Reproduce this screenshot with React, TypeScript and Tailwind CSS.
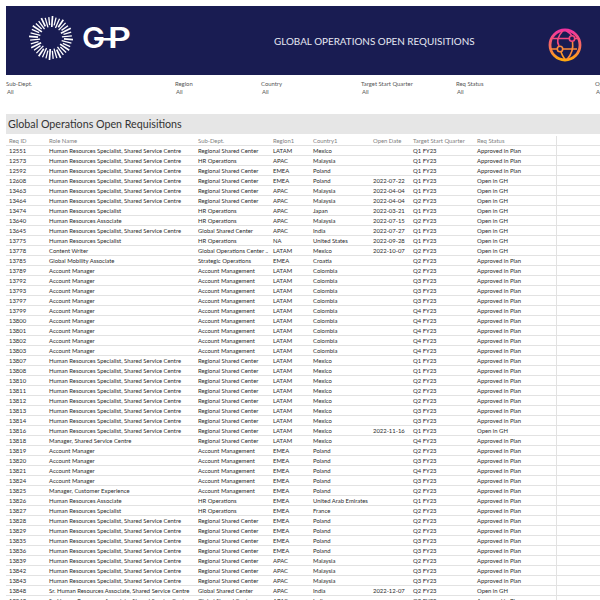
// Global Operations Open Requisitions dashboard
const HRSS = 'Human Resources Specialist, Shared Service Centre';
const HRS = 'Human Resources Specialist';
const HRA = 'Human Resources Associate';
const SRA = 'Sr. Human Resources Associate, Shared Service Centre';
const AM = 'Account Manager';
const RSC = 'Regional Shared Center';
const HRO = 'HR Operations';
const GSC = 'Global Shared Center';
const ACM = 'Account Management';
const PLAN = 'Approved in Plan';
const GH = 'Open in GH';

type Row = [string, string, string, string, string, string, string, string];

const rows: Row[] = [
  ['12551', HRSS, RSC, 'LATAM', 'Mexico', '', 'Q1 FY23', PLAN],
  ['12573', HRSS, HRO, 'APAC', 'Malaysia', '', 'Q1 FY23', PLAN],
  ['12592', HRSS, RSC, 'EMEA', 'Poland', '', 'Q1 FY23', PLAN],
  ['12608', HRSS, RSC, 'EMEA', 'Poland', '2022-07-22', 'Q1 FY23', GH],
  ['13463', HRSS, RSC, 'APAC', 'Malaysia', '2022-04-04', 'Q1 FY23', GH],
  ['13464', HRSS, RSC, 'APAC', 'Malaysia', '2022-04-04', 'Q2 FY23', GH],
  ['13474', HRS, HRO, 'APAC', 'Japan', '2022-03-21', 'Q1 FY23', GH],
  ['13640', HRA, HRO, 'APAC', 'Malaysia', '2022-07-15', 'Q2 FY23', GH],
  ['13645', HRSS, GSC, 'APAC', 'India', '2022-07-27', 'Q1 FY23', GH],
  ['13775', HRS, HRO, 'NA', 'United States', '2022-09-28', 'Q1 FY23', GH],
  ['13778', 'Content Writer', 'Global Operations Center ..', 'LATAM', 'Mexico', '2022-10-07', 'Q2 FY23', GH],
  ['13785', 'Global Mobility Associate', 'Strategic Operations', 'EMEA', 'Croatia', '', 'Q2 FY23', PLAN],
  ['13789', AM, ACM, 'LATAM', 'Colombia', '', 'Q2 FY23', PLAN],
  ['13792', AM, ACM, 'LATAM', 'Colombia', '', 'Q3 FY23', PLAN],
  ['13793', AM, ACM, 'LATAM', 'Colombia', '', 'Q3 FY23', PLAN],
  ['13797', AM, ACM, 'LATAM', 'Colombia', '', 'Q3 FY23', PLAN],
  ['13799', AM, ACM, 'LATAM', 'Colombia', '', 'Q4 FY23', PLAN],
  ['13800', AM, ACM, 'LATAM', 'Colombia', '', 'Q4 FY23', PLAN],
  ['13801', AM, ACM, 'LATAM', 'Colombia', '', 'Q4 FY23', PLAN],
  ['13802', AM, ACM, 'LATAM', 'Colombia', '', 'Q4 FY23', PLAN],
  ['13803', AM, ACM, 'LATAM', 'Colombia', '', 'Q4 FY23', PLAN],
  ['13807', HRSS, RSC, 'LATAM', 'Mexico', '', 'Q1 FY23', PLAN],
  ['13808', HRSS, RSC, 'LATAM', 'Mexico', '', 'Q1 FY23', PLAN],
  ['13810', HRSS, RSC, 'LATAM', 'Mexico', '', 'Q2 FY23', PLAN],
  ['13811', HRSS, RSC, 'LATAM', 'Mexico', '', 'Q2 FY23', PLAN],
  ['13812', HRSS, RSC, 'LATAM', 'Mexico', '', 'Q2 FY23', PLAN],
  ['13813', HRSS, RSC, 'LATAM', 'Mexico', '', 'Q3 FY23', PLAN],
  ['13814', HRSS, RSC, 'LATAM', 'Mexico', '', 'Q3 FY23', PLAN],
  ['13816', HRSS, RSC, 'LATAM', 'Mexico', '2022-11-16', 'Q1 FY23', GH],
  ['13818', 'Manager, Shared Service Centre', RSC, 'LATAM', 'Mexico', '', 'Q4 FY23', PLAN],
  ['13819', AM, ACM, 'EMEA', 'Poland', '', 'Q2 FY23', PLAN],
  ['13820', AM, ACM, 'EMEA', 'Poland', '', 'Q3 FY23', PLAN],
  ['13821', AM, ACM, 'EMEA', 'Poland', '', 'Q4 FY23', PLAN],
  ['13824', AM, ACM, 'EMEA', 'Poland', '', 'Q3 FY23', PLAN],
  ['13825', 'Manager, Customer Experience', ACM, 'EMEA', 'Poland', '', 'Q2 FY23', PLAN],
  ['13826', HRA, HRO, 'EMEA', 'United Arab Emirates', '', 'Q1 FY23', PLAN],
  ['13827', HRS, HRO, 'EMEA', 'France', '', 'Q2 FY23', PLAN],
  ['13828', HRSS, RSC, 'EMEA', 'Poland', '', 'Q2 FY23', PLAN],
  ['13829', HRSS, RSC, 'EMEA', 'Poland', '', 'Q2 FY23', PLAN],
  ['13835', HRSS, RSC, 'EMEA', 'Poland', '', 'Q3 FY23', PLAN],
  ['13836', HRSS, RSC, 'EMEA', 'Poland', '', 'Q3 FY23', PLAN],
  ['13839', HRSS, RSC, 'APAC', 'Malaysia', '', 'Q2 FY23', PLAN],
  ['13842', HRSS, RSC, 'APAC', 'Malaysia', '', 'Q3 FY23', PLAN],
  ['13843', HRSS, RSC, 'APAC', 'Malaysia', '', 'Q3 FY23', PLAN],
  ['13848', SRA, GSC, 'APAC', 'India', '2022-12-07', 'Q2 FY23', GH],
  ['13849', SRA, GSC, 'APAC', 'India', '', 'Q2 FY23', PLAN],
];

const headers = ['Req ID', 'Role Name', 'Sub-Dept.', 'Region1', 'Country1', 'Open Date', 'Target Start Quarter', 'Req Status'];

const filters = [
  { label: 'Sub-Dept.', value: 'All', cls: 'w-[169px]' },
  { label: 'Region', value: 'All', cls: 'w-[86px]' },
  { label: 'Country', value: 'All', cls: 'w-[100px]' },
  { label: 'Target Start Quarter', value: 'All', cls: 'w-[95px]' },
  { label: 'Req Status', value: 'All', cls: 'w-[139px]' },
  { label: 'Op', value: 'A', cls: 'w-[5px]' },
];

const GRID = 'grid grid-cols-[40px_149px_75px_40px_60px_40px_64px_79px_44px]';

function Sunburst() {
  const ticks = Array.from({ length: 36 }, (_, i) => i * 10);
  return (
    <svg width="48" height="48" viewBox="0 0 48 48" className="shrink-0">
      {ticks.map((a, i) => (
        <line
          key={a}
          x1="24"
          y1={i % 2 ? 11 : 13}
          x2="24"
          y2={i % 3 === 0 ? 2 : 3}
          stroke="#fff"
          strokeWidth={i % 3 === 0 ? 1.7 : 1.3}
          transform={`rotate(${a + 4} 24 24)`}
        />
      ))}
    </svg>
  );
}

function GlobeIcon() {
  return (
    <svg width="34" height="34" viewBox="0 0 34 34" fill="none" className="mt-[9px] shrink-0">
      <defs>
        <linearGradient id="globeGrad" x1="0" y1="0" x2="0" y2="1">
          <stop offset="0" stopColor="#f0329f" />
          <stop offset="0.55" stopColor="#f8705a" />
          <stop offset="1" stopColor="#ffa80f" />
        </linearGradient>
      </defs>
      <circle cx="17" cy="17" r="15" stroke="url(#globeGrad)" strokeWidth="2.8" />
      <g strokeWidth="1.6">
        <path d="M5 10.5H21.5M26.5 10.5H30" stroke="#f4487f" />
        <path d="M3 21H9.5M14.5 21H29" stroke="#fb8a3a" />
        <path d="M15 2.5C10 8 8 13 11 18" stroke="#f4487f" />
        <path d="M13 24C14 27 15.5 29.5 17 31.5" stroke="#fd9a25" />
        <path d="M18 2.5C22 5 23.5 7 24 8" stroke="#f23c92" />
        <path d="M24.5 13.5C25.5 20 23 27 19 31.5" stroke="#fb8a3a" />
        <circle cx="24" cy="10.5" r="2.7" stroke="#f4487f" />
        <circle cx="12" cy="21" r="2.7" stroke="#fb8a3a" />
      </g>
    </svg>
  );
}

export default function App() {
  return (
    <div className="h-[600px] w-[600px] overflow-hidden bg-white pl-[6px] pt-[6px] font-['Lato',sans-serif]">
      {/* Banner */}
      <div className="flex h-[69px] items-center overflow-hidden bg-[#191c52] pl-[21px]">
        <div className="mb-[6px] flex shrink-0 items-center">
          <Sunburst />
          <svg width="54" height="36" viewBox="0 0 54 36" className="ml-[6px] shrink-0">
            <text x="1" y="27.5" fontSize="29" fontWeight="600" fill="#fff" fontFamily="Inter, sans-serif" textLength="23" lengthAdjust="spacingAndGlyphs">G</text>
            <text x="27" y="27.5" fontSize="29" fontWeight="600" fill="#fff" fontFamily="Inter, sans-serif" textLength="23" lengthAdjust="spacingAndGlyphs">P</text>
            <rect x="14" y="18" width="17" height="2.6" fill="#fff" />
          </svg>
        </div>
        <div className="ml-[139px] mt-[2px] w-[274px] text-[9.9px] leading-none whitespace-nowrap text-[#e6e8f2]">GLOBAL OPERATIONS OPEN REQUISITIONS</div>
        <GlobeIcon />
      </div>

      {/* Filters */}
      <div className="mt-[5px] flex h-[34px] text-[5.9px] leading-[8px] text-[#555]">
        {filters.map((f) => (
          <div key={f.label} className={`${f.cls} shrink-0`}>
            <div className="whitespace-nowrap">{f.label}</div>
            <div className="pl-px">{f.value}</div>
          </div>
        ))}
      </div>

      {/* Title band */}
      <div className="flex h-[20px] items-center bg-[#e6e6e6] pl-[2px] text-[10.7px] text-[#333]">Global Operations Open Requisitions</div>

      {/* Table */}
      <div className="mt-[2px] text-[5.9px] leading-[9px] whitespace-nowrap">
        <div className={`${GRID} h-[10px] items-center border-b border-[#e2e2e2] pl-[3px] text-[#808080]`}>
          {headers.map((h) => (
            <div key={h}>{h}</div>
          ))}
          <div className="h-full border-l border-[#e2e2e2]" />
        </div>
        {rows.map((r) => (
          <div key={r[0]} className={`${GRID} h-[10px] items-center border-b border-[#e2e2e2] pl-[3px] text-[#2a2a2a]`}>
            {r.map((c, i) => (
              <div key={i}>{c}</div>
            ))}
            <div className="h-full border-l border-[#e2e2e2]" />
          </div>
        ))}
      </div>
    </div>
  );
}
